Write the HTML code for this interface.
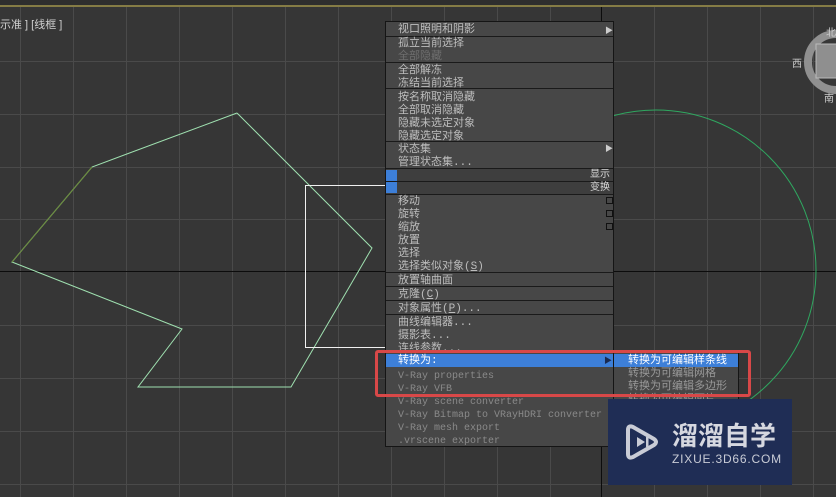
<!DOCTYPE html>
<html><head><meta charset="utf-8"><style>
*{margin:0;padding:0;box-sizing:border-box}
body{width:836px;height:497px;overflow:hidden;background:#363636;position:relative;font-family:"Liberation Mono","Noto Sans CJK SC",monospace;font-size:11px;color:#bdbdbd}
.r{position:absolute;left:398px;height:13px;line-height:13px;white-space:nowrap;font-size:11px;transform:translateY(2px)}
.m{font-size:10px}
.d{color:#6e6e6e}
.sep{position:absolute;left:386px;width:227px;height:1px;background:#1a1a1a}
</style></head><body>
<svg width="836" height="497" style="position:absolute;left:0;top:0">
<g stroke="#4a4a4a" stroke-width="1">
<line x1="20.5" y1="0" x2="20.5" y2="497"/><line x1="73.5" y1="0" x2="73.5" y2="497"/><line x1="126.5" y1="0" x2="126.5" y2="497"/><line x1="179.5" y1="0" x2="179.5" y2="497"/><line x1="232.5" y1="0" x2="232.5" y2="497"/><line x1="285.5" y1="0" x2="285.5" y2="497"/><line x1="338.5" y1="0" x2="338.5" y2="497"/><line x1="391.5" y1="0" x2="391.5" y2="497"/><line x1="444.5" y1="0" x2="444.5" y2="497"/><line x1="497.5" y1="0" x2="497.5" y2="497"/><line x1="550.5" y1="0" x2="550.5" y2="497"/><line x1="654.5" y1="0" x2="654.5" y2="497"/><line x1="707.5" y1="0" x2="707.5" y2="497"/><line x1="760.5" y1="0" x2="760.5" y2="497"/><line x1="813.5" y1="0" x2="813.5" y2="497"/>
<line x1="0" y1="61.5" x2="836" y2="61.5"/><line x1="0" y1="114.5" x2="836" y2="114.5"/><line x1="0" y1="167.5" x2="836" y2="167.5"/><line x1="0" y1="219.5" x2="836" y2="219.5"/><line x1="0" y1="325.5" x2="836" y2="325.5"/><line x1="0" y1="378.5" x2="836" y2="378.5"/><line x1="0" y1="431.5" x2="836" y2="431.5"/><line x1="0" y1="484.5" x2="836" y2="484.5"/>
</g>
<line x1="0" y1="271.5" x2="836" y2="271.5" stroke="#0c0c0c"/>
<line x1="601.5" y1="0" x2="601.5" y2="497" stroke="#0c0c0c"/>
<rect x="0" y="0" width="836" height="5" fill="#2e2e2e"/>
<rect x="0" y="5" width="836" height="2" fill="#857c45"/>
<circle cx="656" cy="270" r="160" fill="none" stroke="#2fa860" stroke-width="1"/>
<polyline points="237,113 372,248 291,387 138,387 182,329 12,262 92,167 237,113" fill="none" stroke="#9fe0b0" stroke-width="1"/>
<line x1="12" y1="262" x2="92" y2="167" stroke="#6a8a3a"/>
<rect x="305.5" y="185.5" width="80" height="162" fill="none" stroke="#f0f0f0"/>
<circle cx="836" cy="62" r="28" fill="none" stroke="#909090" stroke-width="8"/>
<rect x="816" y="44" width="24" height="34" fill="#8f8f8f" stroke="#bbb"/>
</svg>
<div style="position:absolute;left:0;top:16px;font-family:'Liberation Sans','Noto Sans CJK SC',sans-serif;font-size:11px;color:#cfcfcf">示准 ] [线框 ]</div>
<div style="position:absolute;left:792px;top:55px;font-size:10px;color:#ccc">西</div>
<div style="position:absolute;left:826px;top:24px;font-size:10px;color:#ccc">北</div>
<div style="position:absolute;left:824px;top:90px;font-size:10px;color:#ccc">南</div>

<div style="position:absolute;left:385px;top:21px;width:229px;height:426px;background:#474747;border:1px solid #151515"></div>
<div style="position:absolute;left:386px;top:169px;width:227px;height:25px;background:#3e3e3e"></div>
<div class="sep" style="top:36px"></div><div class="sep" style="top:62px"></div><div class="sep" style="top:88px"></div><div class="sep" style="top:141px"></div><div class="sep" style="top:168px"></div><div class="sep" style="top:181px"></div><div class="sep" style="top:194px"></div><div class="sep" style="top:272px"></div><div class="sep" style="top:286px"></div><div class="sep" style="top:300px"></div><div class="sep" style="top:314px"></div>
<div style="position:absolute;left:386px;top:170px;width:11px;height:11px;background:#3d7fd8"></div>
<div style="position:absolute;left:386px;top:182px;width:11px;height:11px;background:#3d7fd8"></div>
<div style="position:absolute;left:580px;top:170px;width:30px;text-align:right;font-size:10px;line-height:12px;color:#d8d8d8">显示</div>
<div style="position:absolute;left:580px;top:183px;width:30px;text-align:right;font-size:10px;line-height:12px;color:#d8d8d8">变换</div>
<div style="position:absolute;left:606px;top:197px;width:7px;height:7px;border:1px solid #111"></div>
<div style="position:absolute;left:606px;top:210px;width:7px;height:7px;border:1px solid #111"></div>
<div style="position:absolute;left:606px;top:223px;width:7px;height:7px;border:1px solid #111"></div>
<div style="position:absolute;left:605px;top:25px;font-size:8px;color:#ccc">▶</div>
<div style="position:absolute;left:605px;top:143px;font-size:8px;color:#ccc">▶</div>

<div class="r" style="top:22px">视口照明和阴影</div>
<div class="r" style="top:36px">孤立当前选择</div>
<div class="r d" style="top:49px">全部隐藏</div>
<div class="r" style="top:63px">全部解冻</div>
<div class="r" style="top:76px">冻结当前选择</div>
<div class="r" style="top:90px">按名称取消隐藏</div>
<div class="r" style="top:103px">全部取消隐藏</div>
<div class="r" style="top:116px">隐藏未选定对象</div>
<div class="r" style="top:129px">隐藏选定对象</div>
<div class="r" style="top:142px">状态集</div>
<div class="r" style="top:155px">管理状态集...</div>
<div class="r" style="top:194px">移动</div>
<div class="r" style="top:207px">旋转</div>
<div class="r" style="top:220px">缩放</div>
<div class="r" style="top:233px">放置</div>
<div class="r" style="top:246px">选择</div>
<div class="r" style="top:259px">选择类似对象(<u>S</u>)</div>
<div class="r" style="top:273px">放置轴曲面</div>
<div class="r" style="top:287px">克隆(<u>C</u>)</div>
<div class="r" style="top:301px">对象属性(<u>P</u>)...</div>
<div class="r" style="top:315px">曲线编辑器...</div>
<div class="r" style="top:328px">摄影表...</div>
<div class="r" style="top:341px">连线参数...</div>
<div style="position:absolute;left:386px;top:354px;width:227px;height:13px;background:#3d7fd8"></div>
<div class="r" style="top:353px;color:#fff">转换为:</div>
<div style="position:absolute;left:604px;top:355px;font-size:8px;color:#1a2a50">▶</div>
<div class="r m" style="top:368px;color:#8a8a8a">V-Ray properties</div>
<div class="r m" style="top:381px;color:#8a8a8a">V-Ray VFB</div>
<div class="r m" style="top:394px;color:#8a8a8a">V-Ray scene converter</div>
<div class="r m" style="top:407px;color:#8a8a8a">V-Ray Bitmap to VRayHDRI converter</div>
<div class="r m" style="top:420px;color:#8a8a8a">V-Ray mesh export</div>
<div class="r m" style="top:433px;color:#8a8a8a">.vrscene exporter</div>

<div style="position:absolute;left:614px;top:352px;width:125px;height:50px;background:#474747;border:1px solid #151515;border-left:none"></div>
<div style="position:absolute;left:614px;top:354px;width:124px;height:13px;background:#3d7fd8"></div>
<div class="r" style="left:628px;top:353px;color:#fff">转换为可编辑样条线</div>
<div class="r" style="left:628px;top:366px;color:#999">转换为可编辑网格</div>
<div class="r" style="left:628px;top:379px;color:#999">转换为可编辑多边形</div>
<div class="r" style="left:628px;top:392px;color:#999">转换为可编辑面片</div>

<div style="position:absolute;left:375px;top:350px;width:376px;height:47px;border:3px solid #d84848;border-radius:3px"></div>

<div style="position:absolute;left:608px;top:399px;width:184px;height:86px;background:#1f2d55"></div>
<svg width="40" height="40" style="position:absolute;left:622px;top:422px" viewBox="0 0 40 40">
<path d="M6 8 Q6 3 11 5 L32 17 Q36 20 32 23 L11 35 Q6 37 6 32 Z" fill="none" stroke="#c9ccd6" stroke-width="4" stroke-linejoin="round"/>
<path d="M15 15 L23 20 L15 25 Z" fill="#c9ccd6"/><rect x="24" y="15" width="2.5" height="10" fill="#c9ccd6"/>
</svg>
<div style="position:absolute;left:672px;top:420px;font-family:'Noto Sans CJK SC',sans-serif;font-size:26px;line-height:30px;font-weight:bold;color:#d6d8e0">溜溜自学</div>
<div style="position:absolute;left:672px;top:452px;font-family:'Liberation Sans',sans-serif;font-size:12px;color:#c9ccd6;letter-spacing:0.8px">ZIXUE.3D66.COM</div>
</body></html>
